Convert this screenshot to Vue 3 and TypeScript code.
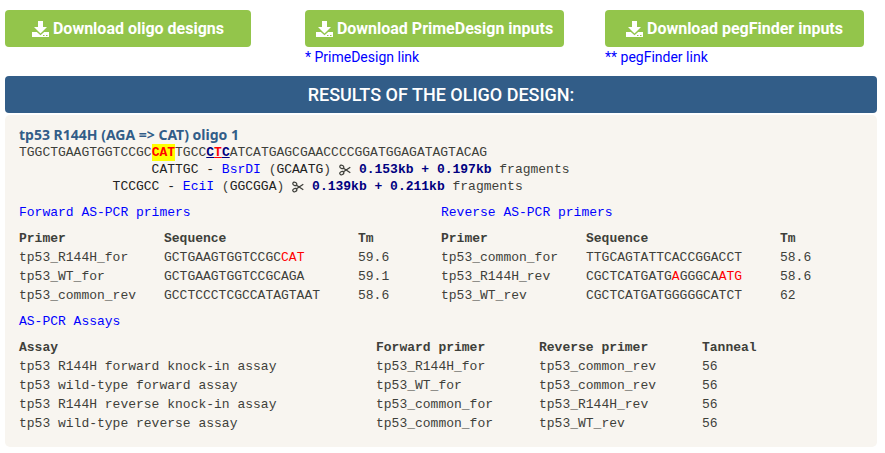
<script setup lang="ts">
interface Part { text: string; kind?: string }
interface Primer { name: string; sequence: Part[]; tm: string }

const downloads = [
  { label: 'Download oligo designs', size: 'narrow', link: '' },
  { label: 'Download PrimeDesign inputs', size: 'wide', link: '* PrimeDesign link' },
  { label: 'Download pegFinder inputs', size: 'wide', link: '** pegFinder link' },
]

const oligo: Part[] = [
  { text: 'TGGCTGAAGTGGTCCGC' },
  { text: 'CAT', kind: 'edit' },
  { text: 'TGCC' },
  { text: 'C', kind: 'pam' },
  { text: 'T', kind: 'pam changed' },
  { text: 'C', kind: 'pam' },
  { text: 'ATCATGAGCGAACCCCGGATGGAGATAGTACAG' },
]

const enzymes = [
  { indent: 17, site: 'CATTGC', name: 'BsrDI', motif: 'GCAATG', fragments: '0.153kb + 0.197kb' },
  { indent: 12, site: 'TCCGCC', name: 'EciI', motif: 'GGCGGA', fragments: '0.139kb + 0.211kb' },
]

const primerSets: { title: string; primers: Primer[] }[] = [
  {
    title: 'Forward AS-PCR primers',
    primers: [
      { name: 'tp53_R144H_for', sequence: [{ text: 'GCTGAAGTGGTCCGC' }, { text: 'CAT', kind: 'mismatch' }], tm: '59.6' },
      { name: 'tp53_WT_for', sequence: [{ text: 'GCTGAAGTGGTCCGCAGA' }], tm: '59.1' },
      { name: 'tp53_common_rev', sequence: [{ text: 'GCCTCCCTCGCCATAGTAAT' }], tm: '58.6' },
    ],
  },
  {
    title: 'Reverse AS-PCR primers',
    primers: [
      { name: 'tp53_common_for', sequence: [{ text: 'TTGCAGTATTCACCGGACCT' }], tm: '58.6' },
      {
        name: 'tp53_R144H_rev',
        sequence: [{ text: 'CGCTCATGATG' }, { text: 'A', kind: 'mismatch' }, { text: 'GGGCA' }, { text: 'ATG', kind: 'mismatch' }],
        tm: '58.6',
      },
      { name: 'tp53_WT_rev', sequence: [{ text: 'CGCTCATGATGGGGGCATCT' }], tm: '62' },
    ],
  },
]

const assays = [
  { name: 'tp53 R144H forward knock-in assay', forward: 'tp53_R144H_for', reverse: 'tp53_common_rev', anneal: 56 },
  { name: 'tp53 wild-type forward assay', forward: 'tp53_WT_for', reverse: 'tp53_common_rev', anneal: 56 },
  { name: 'tp53 R144H reverse knock-in assay', forward: 'tp53_common_for', reverse: 'tp53_R144H_rev', anneal: 56 },
  { name: 'tp53 wild-type reverse assay', forward: 'tp53_common_for', reverse: 'tp53_WT_rev', anneal: 56 },
]
</script>

<template>
  <main class="page">
    <div class="downloads">
      <div v-for="item in downloads" :key="item.label" class="download">
        <button type="button" class="btn" :class="item.size">
          <svg class="tray" viewBox="0 0 17 16" aria-hidden="true">
            <path fill-rule="evenodd" d="M6 0h5v6h4L8.500 12.500 2 6h4zM0 11h4.800L8.500 14.300 12.200 11H17V16H0zM11 14v1h1.500v-1zM14 14v1h1.500v-1z" />
          </svg>
          <span>{{ item.label }}</span>
        </button>
        <a v-if="item.link" href="#">{{ item.link }}</a>
      </div>
    </div>

    <h1 class="banner">RESULTS OF THE OLIGO DESIGN:</h1>

    <section class="panel">
      <h2 class="title">tp53 R144H (AGA =&gt; CAT) oligo 1</h2>
      <div class="line"><span v-for="(part, i) in oligo" :key="i" :class="part.kind">{{ part.text }}</span></div>
      <div v-for="enzyme in enzymes" :key="enzyme.name" class="line">
        <span class="site">{{ ' '.repeat(enzyme.indent) }}{{ enzyme.site }} - </span><a href="#">{{ enzyme.name }}</a> (<span class="site">{{ enzyme.motif }}</span>)
        <svg class="scissors" viewBox="0 0 12 12" role="img" aria-label="cuts into">
          <g fill="none" stroke="currentColor">
            <ellipse cx="2.800" cy="2.900" rx="2.100" ry="1.600" transform="rotate(28 2.8 2.9)" stroke-width="1.200" />
            <ellipse cx="2.800" cy="9.100" rx="2.100" ry="1.600" transform="rotate(-28 2.8 9.1)" stroke-width="1.200" />
            <path d="M4.500 4.200L11.300 8.800M4.500 7.800L11.300 3.200" stroke-width="1.300" />
          </g>
        </svg>
        <b class="sizes">{{ enzyme.fragments }}</b> fragments
      </div>

      <div class="primer-sets">
        <div v-for="set in primerSets" :key="set.title">
          <h3 class="subtitle">{{ set.title }}</h3>
          <table>
            <colgroup><col class="primer-col"><col class="sequence-col"><col></colgroup>
            <thead><tr><th>Primer</th><th>Sequence</th><th>Tm</th></tr></thead>
            <tbody>
              <tr v-for="primer in set.primers" :key="primer.name">
                <td>{{ primer.name }}</td>
                <td><span v-for="(part, i) in primer.sequence" :key="i" :class="part.kind">{{ part.text }}</span></td>
                <td>{{ primer.tm }}</td>
              </tr>
            </tbody>
          </table>
        </div>
      </div>

      <h3 class="subtitle">AS-PCR Assays</h3>
      <table>
        <colgroup><col class="assay-col"><col class="pair-col"><col class="pair-col"><col></colgroup>
        <thead><tr><th>Assay</th><th>Forward primer</th><th>Reverse primer</th><th>Tanneal</th></tr></thead>
        <tbody>
          <tr v-for="assay in assays" :key="assay.name">
            <td>{{ assay.name }}</td>
            <td>{{ assay.forward }}</td>
            <td>{{ assay.reverse }}</td>
            <td>{{ assay.anneal }}</td>
          </tr>
        </tbody>
      </table>
    </section>
  </main>
</template>

<style>
body {
  background: #fff;
}
</style>

<style scoped>
.page {
  padding: 10px 8px 6px 5px;
  color: #3e3f3a;
  font: 14px/20px Roboto, sans-serif;
}
a {
  color: #00f;
  text-decoration: none;
}
.downloads {
  display: grid;
  grid-template-columns: 300px 300px minmax(0, 1fr);
  min-height: 66px;
}
.download {
  display: flex;
  flex-direction: column;
  align-items: flex-start;
}
.btn {
  display: flex;
  align-items: center;
  justify-content: center;
  gap: 4px;
  height: 37px;
  padding: 0;
  border: 0;
  border-radius: 4px;
  background: #93c54b;
  color: #fff;
  font: 700 16px/20px Roboto, sans-serif;
  cursor: pointer;
}
.narrow {
  width: 246px;
}
.wide {
  width: 259px;
}
.tray {
  width: 17px;
  height: 16px;
  fill: #fff;
}
.banner {
  margin: 0 0 2px;
  border-radius: 4px;
  background: #325d88;
  color: #fff;
  font: 500 18px/37px Roboto, sans-serif;
  text-align: center;
}
.panel {
  padding: 10px 14px 14px;
  border-radius: 5px;
  background: #f8f5f0;
  font: 13px/19px "Liberation Mono", "Courier New", monospace;
}
.title {
  margin: 0;
  color: #325d88;
  font: bold 14px/19px "Noto Sans", Tahoma, sans-serif;
}
.line {
  display: flex;
  align-items: center;
  line-height: 17px;
  white-space: pre;
}
.edit {
  background: #ff0;
  color: #f00;
  font-weight: bold;
}
.pam {
  color: #000080;
  font-weight: bold;
  text-decoration: underline;
}
.changed,
.mismatch {
  color: #f00;
}
.site {
  color: #222;
}
.scissors {
  width: 12px;
  height: 12px;
  margin-right: 8px;
}
.sizes {
  color: #000080;
}
.primer-sets {
  display: grid;
  grid-template-columns: 1fr 1fr;
  margin: 8px 0 7px;
}
.subtitle {
  margin: 0 0 7px;
  color: #00f;
  font-size: 13px;
  font-weight: normal;
}
table {
  width: 100%;
  border-collapse: collapse;
  table-layout: fixed;
}
th,
td {
  padding: 0;
  text-align: left;
  white-space: nowrap;
}
.primer-col {
  width: 145px;
}
.sequence-col {
  width: 194px;
}
.assay-col {
  width: 357px;
}
.pair-col {
  width: 163px;
}
</style>
